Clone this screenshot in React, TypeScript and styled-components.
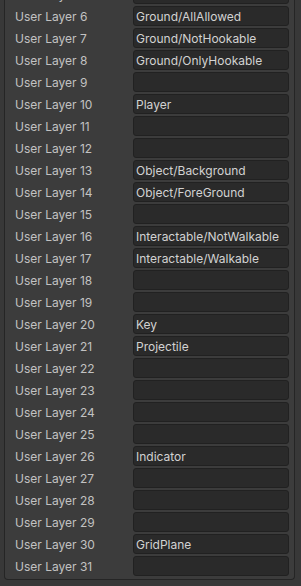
import React from "react";
import styled, { createGlobalStyle } from "styled-components";

const GlobalStyle = createGlobalStyle`
  html, body {
    margin: 0;
    padding: 0;
    background: #383838;
    overflow: hidden;
  }
  body {
    font-family: Inter, "Noto Sans", sans-serif;
  }
`;

const Page = styled.div`
  width: 301px;
  height: 586px;
  overflow: hidden;
  background: #383838;
`;

const Panel = styled.div`
  margin: -17px 6px 0 4px;
  padding: 0 5px 2px 10px;
  background: #3c3c3c;
  border: 1px solid #252525;
  border-top: none;
  border-radius: 0 0 4px 4px;
`;

const Row = styled.div`
  display: grid;
  grid-template-columns: 118px 1fr;
  align-items: center;
  height: 22px;
`;

const Label = styled.span`
  font-size: 12px;
  color: #c2c2c2;
  white-space: nowrap;
`;

const Field = styled.div`
  height: 20px;
  box-sizing: border-box;
  padding: 0 2px;
  display: flex;
  align-items: center;
  background: #2a2a2a;
  border: 1px solid #212121;
  border-radius: 3px;
  font-size: 12px;
  color: #d2d2d2;
  white-space: nowrap;
  overflow: hidden;
`;

const names: Record<number, string> = {
  6: "Ground/AllAllowed",
  7: "Ground/NotHookable",
  8: "Ground/OnlyHookable",
  10: "Player",
  13: "Object/Background",
  14: "Object/ForeGround",
  16: "Interactable/NotWalkable",
  17: "Interactable/Walkable",
  20: "Key",
  21: "Projectile",
  26: "Indicator",
  30: "GridPlane"
};

const layers = Array.from({ length: 27 }, (_, i) => i + 5);

export default function App() {
  return (
    <Page>
      <GlobalStyle />
      <Panel>
        {layers.map(n => (
          <Row key={n}>
            <Label>User Layer {n}</Label>
            <Field>{names[n] ?? ""}</Field>
          </Row>
        ))}
      </Panel>
    </Page>
  );
}
